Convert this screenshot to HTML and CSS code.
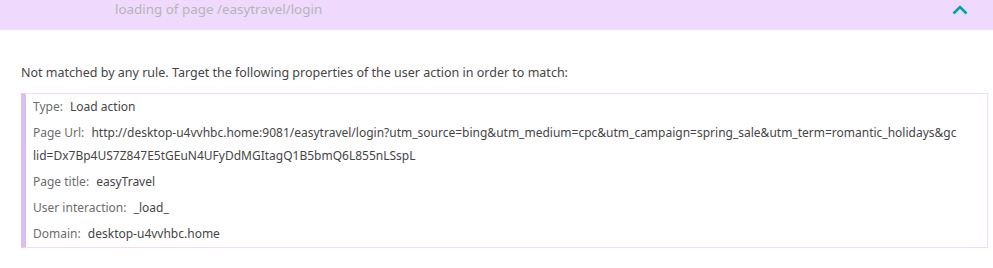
FILE: index.html
```html
<!DOCTYPE html>
<html lang="en">
<head>
    <meta charset="UTF-8">
    <title>User action details</title>
    <link rel="stylesheet" href="styles.css">
</head>
<body>
    <div class="panel-header">
        <span class="panel-title">loading of page /easytravel/login</span>
        <svg class="chevron" width="16" height="10" viewBox="0 0 16 10">
            <path d="M1.5 8.5 L8 2 L14.5 8.5" fill="none" stroke="#00a1b2" stroke-width="2.6"/>
        </svg>
    </div>

    <div class="panel-body">
        <p class="hint">Not matched by any rule. Target the following properties of the user action in order to match:</p>
        <div class="props">
            <div class="prop"><span class="label">Type:</span> <span class="value">Load action</span></div>
            <div class="prop"><span class="label">Page Url:</span> <span class="value">http://desktop-u4vvhbc.home:9081/easytravel/login?utm_source=bing&amp;utm_medium=cpc&amp;utm_campaign=spring_sale&amp;utm_term=romantic_holidays&amp;gclid=Dx7Bp4US7Z847E5tGEuN4UFyDdMGItagQ1B5bmQ6L855nLSspL</span></div>
            <div class="prop"><span class="label">Page title:</span> <span class="value">easyTravel</span></div>
            <div class="prop"><span class="label">User interaction:</span> <span class="value">_load_</span></div>
            <div class="prop"><span class="label">Domain:</span> <span class="value">desktop-u4vvhbc.home</span></div>
        </div>
    </div>
</body>
</html>
```

FILE: styles.css
```css
body {
    margin: 0;
    font-family: "Noto Sans", "Open Sans", sans-serif;
    background: #fff;
}
.panel-header {
    height: 30px;
    background: #efdafd;
    display: flex;
    align-items: center;
    padding: 0 25px 0 115px;
    box-sizing: border-box;
}
.panel-title {
    flex: 1;
    color: #b5b5b5;
    font-size: 13.4px;
    margin-top: -12px;
}
.chevron {
    margin-top: -11px;
}
.panel-body {
    padding: 34px 5px 0 21px;
}
.hint {
    margin: 0 0 12px;
    font-size: 12.5px;
    color: #454545;
}
.props {
    border: 1px solid #efdcfc;
    border-left: 5px solid #dbbdf2;
    padding: 1px 30px 2px 7px;
}
.prop {
    font-size: 12px;
    line-height: 23px;
    margin-bottom: 3px;
    word-break: break-all;
}
.prop:last-child {
    margin-bottom: 0;
}
.label {
    color: #6d6d6d;
    margin-right: 4px;
}
.value {
    color: #454545;
}
```
